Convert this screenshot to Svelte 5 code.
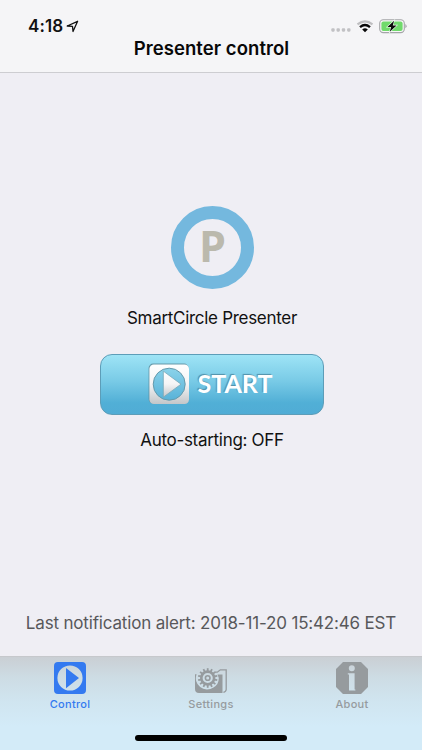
<script>
  let active = "Control";
  const tabs = ["Control", "Settings", "About"];
  const teeth = Array.from({ length: 14 }, (_, i) => (i * 360) / 14);
  let lastAlert = "2018-11-20 15:42:46 EST";
  let autoStart = false;
</script>

<div class="screen">
  <header>
    <div class="status">
      <span class="time">4:18</span>
      <svg class="location" width="13" height="13" viewBox="0 0 13 13">
        <path d="M1.2 6 L11.6 1.3 L7 11.5 L6.5 6.3 Z" fill="none" stroke="#111" stroke-width="1.3" stroke-linejoin="round" />
      </svg>
      <svg class="signal" width="20" height="4" viewBox="0 0 20 4">
        {#each [2, 7.2, 12.5, 17.8] as x}
          <rect x={x - 1.7} y="0.3" width="3.4" height="3.4" rx="1.1" fill="#c1c1c4" />
        {/each}
      </svg>
      <svg class="wifi" width="18" height="13" viewBox="0 0 18 13">
        <path d="M1.5 4.3 Q9 -1.7 16.5 4.3" fill="none" stroke="#bebec0" stroke-width="2.2" />
        <path d="M4 7.1 Q9 3.1 14 7.1" fill="none" stroke="#080808" stroke-width="2.4" />
        <path d="M6.2 9.4 Q9 7.2 11.8 9.4 L9 12.3 Z" fill="#080808" />
      </svg>
      <svg class="battery" width="28" height="15" viewBox="0 0 28 15">
        <rect x="0.7" y="0.8" width="24.6" height="12.8" rx="3.6" fill="#f8f8f8" stroke="#a4a5a8" stroke-width="1.1" />
        <rect x="2.4" y="2.5" width="21.2" height="9.4" rx="2" fill="#70da6c" />
        <path d="M26.3 5.1 Q29 7.2 26.3 9.3 Z" fill="#a4a5a8" />
        <path d="M15.1 1.8 L8.4 8 H12.1 L10.8 12.8 L17.6 6.4 H13.8 Z" fill="#0a0a0a" stroke="#f2fbf2" stroke-width="1.2" paint-order="stroke" />
      </svg>
    </div>
    <h1>Presenter control</h1>
  </header>

  <main>
    <div class="logo"><span>P</span></div>
    <p class="name">SmartCircle Presenter</p>
    <button class="start" type="button" on:click={() => (autoStart = !autoStart)}>
      <svg width="42" height="42" viewBox="0 0 42 42">
        <defs>
          <linearGradient id="tile" x1="0" y1="0" x2="0" y2="1">
            <stop offset="0" stop-color="#ffffff" />
            <stop offset="0.5" stop-color="#f4f4f5" />
            <stop offset="1" stop-color="#c3c6c9" />
          </linearGradient>
          <linearGradient id="disc" x1="0" y1="0" x2="0" y2="1">
            <stop offset="0" stop-color="#8bd3ea" />
            <stop offset="1" stop-color="#58b2d8" />
          </linearGradient>
        </defs>
        <rect x="0.6" y="0.6" width="40" height="40" rx="4.5" fill="#5f8d9c" opacity="0.85" />
        <rect x="1.4" y="1.4" width="39.6" height="39.6" rx="4.5" fill="url(#tile)" />
        <circle cx="21.2" cy="21.2" r="16" fill="url(#disc)" stroke="#659aac" stroke-width="1" />
        <path d="M15.3 8.1 L33 21.2 L15.3 34.2 Z" fill="url(#tile)" stroke="#76a7b8" stroke-width="0.8" />
      </svg>
      <span>START</span>
    </button>
    <p class="auto">Auto-starting: {autoStart ? "ON" : "OFF"}</p>
    <p class="alert">Last notification alert: {lastAlert}</p>
  </main>

  <nav>
    {#each tabs as tab}
      <button class="tab" class:active={tab === active} type="button" on:click={() => (active = tab)}>
        <svg width="32" height="32" viewBox="0 0 32 32" fill="currentColor">
          {#if tab === "Control"}
            <path fill-rule="evenodd" d="M4 0 H28 Q32 0 32 4 V28 Q32 32 28 32 H4 Q0 32 0 28 V4 Q0 0 4 0 Z M16 3.4 A12.6 12.6 0 1 0 16 28.6 A12.6 12.6 0 1 0 16 3.4 Z M12 6 L25 16 L12 26.2 Z" />
          {:else if tab === "Settings"}
            <path d="M0 12.2 H1.6 A11.2 11.2 0 0 0 18.5 25.4 Q23.8 22.5 23.8 16 L22.5 12.5 H27.5 V31 H4 Q0 31 0 27 Z" />
            <path d="M20 10.2 H22.3 L25.3 7.8 H31.2 V27.5 Q31 29.8 28.4 30.4" fill="none" stroke="currentColor" stroke-width="1.3" />
            <circle cx="12.7" cy="16" r="6.4" fill="none" stroke="currentColor" stroke-width="2.6" />
            <circle cx="12.7" cy="16" r="2.3" fill="none" stroke="currentColor" stroke-width="1.6" />
            {#each teeth as angle}
              <rect x="11.8" y="6.2" width="1.8" height="3" transform="rotate({angle} 12.7 16)" />
            {/each}
          {:else}
            <path fill-rule="evenodd" d="M7 0 H25 L32 7 V25 L25 32 H7 L0 25 V7 Z M15.8 3.2 A3 3 0 1 0 15.8 9.2 A3 3 0 1 0 15.8 3.2 Z M11.8 11.2 H18.6 V27.4 H19.4 V28.6 H13 V12.6 H11.8 Z" />
          {/if}
        </svg>
        <span>{tab}</span>
      </button>
    {/each}
    <div class="home"></div>
  </nav>
</div>

<style>
  :global(body) {
    margin: 0;
  }
  .screen {
    width: 422px;
    height: 750px;
    display: flex;
    flex-direction: column;
    background: #efeef4;
    color: #111;
    font-family: Inter, "Liberation Sans", sans-serif;
    overflow: hidden;
  }
  header {
    height: 72px;
    background: #f5f5f7;
    border-bottom: 1px solid #cdcdd1;
  }
  .status {
    display: flex;
    align-items: center;
    height: 22px;
    padding: 15px 14px 0 28px;
  }
  .time {
    font-size: 17px;
    font-weight: 600;
    letter-spacing: 0.1px;
  }
  .location {
    margin-left: 3px;
  }
  .signal {
    margin: 8px 5px 0 auto;
  }
  .wifi {
    margin-right: 5px;
  }
  .battery {
    margin-right: 1px;
  }
  h1 {
    margin: 0;
    padding-left: 1px;
    font-size: 18.5px;
    font-weight: 600;
    line-height: 22px;
    letter-spacing: 0.05px;
    text-align: center;
    color: #080808;
  }
  main {
    flex: 1;
    padding-left: 2px;
    display: flex;
    flex-direction: column;
    align-items: center;
  }
  .logo {
    box-sizing: border-box;
    width: 83px;
    height: 83px;
    margin-top: 133px;
    border: 13.5px solid #74b8de;
    border-radius: 50%;
    display: flex;
    align-items: center;
    justify-content: center;
  }
  .logo span {
    padding: 0 0 2px 1px;
    font: 700 43px/56px "Open Sans", sans-serif;
    color: #bbb9ad;
  }
  .logo span {
    padding-bottom: 4px;
  }
  p {
    margin: 0;
    line-height: 22px;
    white-space: nowrap;
  }
  .name {
    margin-top: 18px;
    font-size: 17px;
    letter-spacing: -0.3px;
  }
  .start {
    box-sizing: border-box;
    width: 224px;
    height: 61px;
    margin-top: 25px;
    padding: 0 4px 2px 0;
    display: flex;
    align-items: center;
    justify-content: center;
    gap: 8px;
    border: 1px solid #5d9db8;
    border-radius: 12px;
    background: linear-gradient(#a0e5f6, #78cae6 45%, #51afd6 80%, #50acd5) border-box;
  }
  .start span {
    padding-bottom: 2px;
    font: 700 25px/30px Lato, sans-serif;
    color: #fff;
    text-shadow: -1px -1px 1px #518fa8;
  }
  .auto {
    margin-top: 14px;
    font-size: 17px;
    letter-spacing: -0.3px;
  }
  .alert {
    margin-top: auto;
    margin-bottom: 22px;
    padding-right: 2px;
    font-size: 17px;
    letter-spacing: -0.17px;
    color: #58585b;
  }
  nav {
    position: relative;
    box-sizing: border-box;
    height: 94px;
    padding-top: 5px;
    display: grid;
    grid-template-columns: repeat(3, 141px);
    justify-content: center;
    align-items: start;
    border-top: 1px solid #c6c8cc;
    background: linear-gradient(#cacfd4, #cddce4 22%, #d0e5f0 48%, #d3ebf8 75%, #d3ebf8);
  }
  .tab {
    padding: 0;
    display: flex;
    flex-direction: column;
    align-items: center;
    border: 0;
    background: none;
    color: #969b9e;
    font-family: inherit;
  }
  .tab span {
    margin-top: 3px;
    font-size: 11px;
    font-weight: 500;
    line-height: 14px;
    letter-spacing: 0.3px;
  }
  .tab.active {
    color: #347af0;
  }
  .home {
    position: absolute;
    left: 135px;
    bottom: 9px;
    width: 152px;
    height: 6px;
    border-radius: 3px;
    background: #000;
  }
</style>
